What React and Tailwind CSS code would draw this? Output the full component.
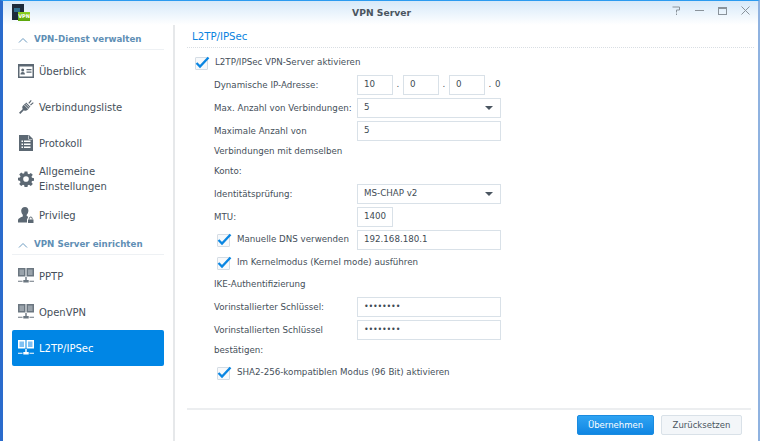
const font = { fontFamily: '"DejaVu Sans", Verdana, sans-serif' };

function Chevron() {
  return (
    <svg width="10" height="6" viewBox="0 0 10 6" className="shrink-0" fill="none" stroke="#6b9ac0" strokeWidth="1">
      <path d="M1 5.500 5 1.500l4 4" />
    </svg>
  );
}

function CardIcon() {
  return (
    <svg width="16" height="16" viewBox="0 0 16 16">
      <path fillRule="evenodd" fill="#5c6873" d="M0 1h16v14H0zM1.500 3.500v10h13v-10z" />
      <circle cx="4.700" cy="7" r="1.500" fill="#5c6873" />
      <path fill="#5c6873" d="M2.500 11.500c0-2 1-2.600 2.200-2.600s2.200.6 2.200 2.600zM8.500 6h5v1.200h-5zM8.500 8.500h5v1.200h-5z" />
    </svg>
  );
}

function PlugIcon() {
  return (
    <svg width="16" height="16" viewBox="0 0 16 16" fill="#5c6873">
      <path d="M8.200 3.600 12.400 7.800 9.400 11c-1.100 1-2.500 1-3.500.2L2.300 15 1 13.700l3.800-3.600C4 9 4.100 7.600 5.100 6.600z" />
      <path d="m10.300 4 2.500-3 .9.8-2.400 3zM12 5.700l2.900-2.500.8.9-2.800 2.500z" />
      <path stroke="#fff" strokeWidth=".7" d="m6 5.700 4.300 4.300M7.300 4.500l4.300 4.300" />
    </svg>
  );
}

function LogIcon() {
  return (
    <svg width="16" height="16" viewBox="0 0 16 16">
      <path fill="#5c6873" d="M1 0h10l4 4v12H1z" />
      <path fill="#fff" d="M11 0v4h4l-1 .6h-3.600V.8zM3.500 5.500h1.500V7H3.500zM6 5.500h6.500V7H6zM3.500 8.500h1.500V10H3.500zM6 8.500h6.500V10H6zM3.500 11.500h1.500V13H3.500zM6 11.500h6.500V13H6z" />
    </svg>
  );
}

function GearIcon() {
  return (
    <svg width="16" height="16" viewBox="0 0 17 17">
      <path fill="#5c6873" fillRule="evenodd" d="M7 .5h3l.4 2.300 1.300.6 1.900-1.400 2.100 2.100-1.400 1.900.6 1.300 2.100.4v2.600l-2.100.4-.6 1.300 1.400 1.900-2.100 2.100-1.900-1.400-1.300.6-.4 2.300H7l-.4-2.300-1.300-.6-1.900 1.400-2.100-2.100 1.400-1.900-.6-1.300L0 9.800V7.200l2.100-.4.6-1.300-1.400-1.900 2.100-2.100 1.900 1.400 1.300-.6zM8.500 5.500a3 3 0 1 0 0 6 3 3 0 0 0 0-6z" />
    </svg>
  );
}

function UserLockIcon() {
  return (
    <svg width="16" height="16" viewBox="0 0 16 16" fill="#5c6873">
      <path d="M7 0c2.200 0 3.400 1.500 3.400 3.600 0 1.900-.8 3.300-1.700 4.100v1.400l1.200.5v1.900H9v4H0v-2.300c0-1.500 2-2.400 4.800-3.600V7.700C3.900 6.900 3.200 5.500 3.200 3.600 3.200 1.500 4.800 0 7 0z" />
      <path d="M10 12.500h5.500V16H10z" />
      <path fill="none" stroke="#5c6873" d="M11.300 12.500v-1a1.450 1.450 0 0 1 2.900 0v1" />
    </svg>
  );
}

function NetIcon({ active }) {
  const c = active ? "#ffffff" : "#6b7680";
  const fill = active ? "#7fc0f2" : "#9aa3ab";
  return (
    <svg width="16" height="16" viewBox="0 0 16 16">
      <path fill={c} d="M0 0h7.500v8.500H0zM8.500 0H16v8.500H8.500z" />
      <path fill={fill} d="M1.500 1.500H6V7H1.500zM10 1.500h4.500V7H10z" />
      <path fill={c} d="M7.300 9h1.400v3h2v2.500H5.300V12h2zM0 12.700h4.500v1.100H0zM11.500 12.700H16v1.100h-4.500z" />
    </svg>
  );
}

function SidebarItem({ icon, active, children }) {
  return (
    <div
      className={`flex h-9 items-center gap-[5px] rounded-[2px] px-[6px] text-[10px] leading-[15px] ${
        active ? "bg-[#0086e5] text-white" : "text-[#454f5a]"
      }`}
    >
      <span className="flex w-4 shrink-0 justify-center">{icon}</span>
      <span className="w-[120px]">{children}</span>
    </div>
  );
}

function SidebarHeader({ children }) {
  return (
    <div className="flex h-[21px] items-center gap-[6px] border-b border-[#eef1f4] pl-[6px] pt-[2px] text-[8.7px] font-bold text-[#5f8fb5]">
      <Chevron />
      <span>{children}</span>
    </div>
  );
}

function Check({ label }) {
  return (
    <div className="flex h-5 items-center gap-[7px]">
      <span className="relative h-[13px] w-[13px] shrink-0 rounded-[1px] border border-[#d5dde5] bg-[#f7f9fb]">
        <svg width="15" height="13" viewBox="0 0 15 13" className="absolute left-[-1px] top-[-2px]">
          <path d="M1.500 7 5 10.500 13.500 1.500" fill="none" stroke="#0a86e2" strokeWidth="2.300" />
        </svg>
      </span>
      {label}
    </div>
  );
}

function CheckText({ children }) {
  return <span className="text-[8.7px] text-[#454f5a]">{children}</span>;
}

function Input({ className = "w-[144px]", children }) {
  return (
    <div className={`flex h-5 shrink-0 items-center border border-[#d9e1e8] bg-white pl-[6px] text-[8.7px] text-[#414b55] ${className}`}>
      {children}
    </div>
  );
}

function Select({ value }) {
  return (
    <Input>
      <span className="flex-1">{value}</span>
      <svg width="8" height="4" viewBox="0 0 8 4" className="mr-[7px]">
        <path d="M0 0h8L4 4z" fill="#4a5560" />
      </svg>
    </Input>
  );
}

function Row({ label, children }) {
  return (
    <div className="flex items-start">
      <div className="w-[143px] shrink-0 text-[8.7px] leading-5 text-[#454f5a]">{label}</div>
      {children}
    </div>
  );
}

function Dot({ children = "." }) {
  return <span className="flex h-5 w-[10px] items-center justify-center text-[8.7px] text-[#454f5a]">{children}</span>;
}

export default function App() {
  return (
    <div
      style={font}
      className="flex h-[441px] w-[760px] flex-col overflow-hidden border-l-[3px] border-r-2 border-t border-l-[#2a6bcc] border-r-[#8fb2e0] border-t-[#2b9bf0] bg-white"
    >
      <header className="relative flex h-6 shrink-0 items-center justify-center bg-gradient-to-b from-[#d6e9f9] to-white">
        <span className="pl-[2px] text-[9.2px] font-bold text-[#4a5560]">VPN Server</span>
        <div className="absolute left-[9px] top-[3px] h-[17px] w-[18px]">
          <div className="h-[16px] w-[12px] bg-[#1d2b3a] pl-[2px] pt-[4px]">
            <div className="h-[4px] w-[6px] bg-[#2f6f8f]" />
          </div>
          <div className="absolute bottom-0 right-0 flex h-[9px] w-[12px] items-center justify-center bg-gradient-to-b from-[#8fd321] to-[#5aa50a] text-[5px] font-bold leading-none text-white">
            VPN
          </div>
        </div>
        <div className="absolute right-[8px] top-[5px] flex items-center gap-[14px]">
          <svg width="9" height="9" viewBox="0 0 9 9" fill="none" stroke="#8a939b" strokeWidth="1">
            <path d="M.5 1h7v3h-3v2.500M4.500 7.500V9" />
          </svg>
          <span className="h-px w-[9px] bg-[#8a939b]" />
          <span className="h-[8px] w-[9px] border border-t-[2px] border-[#8a939b]" />
          <svg width="9" height="9" viewBox="0 0 9 9" stroke="#8a939b" strokeWidth="1">
            <path d="m.5.5 8 8M8.500.5l-8 8" />
          </svg>
        </div>
      </header>

      <div className="flex min-h-0 flex-1">
        <aside className="w-[172px] shrink-0 border-r-2 border-[#e6e8ea] px-[9px] pt-[4px]">
          <SidebarHeader>VPN-Dienst verwalten</SidebarHeader>
          <div className="mt-[3px]">
            <SidebarItem icon={<CardIcon />}>Überblick</SidebarItem>
            <SidebarItem icon={<PlugIcon />}>Verbindungsliste</SidebarItem>
            <SidebarItem icon={<LogIcon />}>Protokoll</SidebarItem>
            <SidebarItem icon={<GearIcon />}>Allgemeine Einstellungen</SidebarItem>
            <SidebarItem icon={<UserLockIcon />}>Privileg</SidebarItem>
          </div>
          <div className="mt-px">
            <SidebarHeader>VPN Server einrichten</SidebarHeader>
          </div>
          <div className="mt-[3px]">
            <SidebarItem icon={<NetIcon />}>PPTP</SidebarItem>
            <SidebarItem icon={<NetIcon />}>OpenVPN</SidebarItem>
            <SidebarItem active icon={<NetIcon active />}>L2TP/IPSec</SidebarItem>
          </div>
        </aside>

        <main className="flex min-w-0 flex-1 flex-col pl-3 pr-[4px]">
          <h1 className="h-[23px] border-b border-dotted border-[#d9dee3] pl-[5px] pt-[4px] text-[10.2px] font-normal leading-[16px] text-[#0a84e0]">
            L2TP/IPSec
          </h1>
          <div className="flex-1 pl-[8px] pt-[5px]">
            <Check label={<CheckText>L2TP/IPSec VPN-Server aktivieren</CheckText>} />
            <div className="mt-[2px] flex flex-col gap-[3px] pl-[19px]">
              <Row label="Dynamische IP-Adresse:">
                <Input className="w-[36px]">10</Input>
                <Dot />
                <Input className="w-[36px]">0</Input>
                <Dot />
                <Input className="w-[36px]">0</Input>
                <Dot />
                <span className="flex h-5 items-center text-[8.7px] text-[#454f5a]">0</span>
              </Row>
              <Row label="Max. Anzahl von Verbindungen:">
                <Select value="5" />
              </Row>
              <Row label={<>Maximale Anzahl von<br />Verbindungen mit demselben<br />Konto:</>}>
                <Input>5</Input>
              </Row>
              <Row label="Identitätsprüfung:">
                <Select value="MS-CHAP v2" />
              </Row>
              <Row label="MTU:">
                <Input className="w-[36px]">1400</Input>
              </Row>
              <div className="flex items-start pl-[3px]">
                <div className="w-[140px] shrink-0">
                  <Check label={<CheckText>Manuelle DNS verwenden</CheckText>} />
                </div>
                <Input>192.168.180.1</Input>
              </div>
              <div className="pl-[3px]">
                <Check label={<CheckText>Im Kernelmodus (Kernel mode) ausführen</CheckText>} />
              </div>
              <div className="-mt-[2px] h-5 text-[8.7px] leading-5 text-[#454f5a]">IKE-Authentifizierung</div>
              <Row label="Vorinstallierter Schlüssel:">
                <Input>
                  <span className="text-[8px] tracking-[-0.2px]">••••••••</span>
                </Input>
              </Row>
              <Row label={<>Vorinstallierten Schlüssel<br />bestätigen:</>}>
                <Input>
                  <span className="text-[8px] tracking-[-0.2px]">••••••••</span>
                </Input>
              </Row>
              <div className="pl-[3px]">
                <Check label={<CheckText>SHA2-256-kompatiblen Modus (96 Bit) aktivieren</CheckText>} />
              </div>
            </div>
          </div>
          <footer className="mr-[3px] flex h-[33px] shrink-0 items-start justify-end gap-[7px] border-t-2 border-[#eceef0] pr-[9px] pt-[5px]">
            <button className="h-5 w-[77px] rounded-[2px] border border-[#1a8be0] bg-gradient-to-b from-[#2ea3f2] to-[#0f86e3] text-[8.5px] text-white">
              Übernehmen
            </button>
            <button className="h-5 w-[81px] rounded-[2px] border border-[#d9e1e8] bg-[#f3f6f9] text-[8.5px] text-[#4a5560]">
              Zurücksetzen
            </button>
          </footer>
        </main>
      </div>
    </div>
  );
}
